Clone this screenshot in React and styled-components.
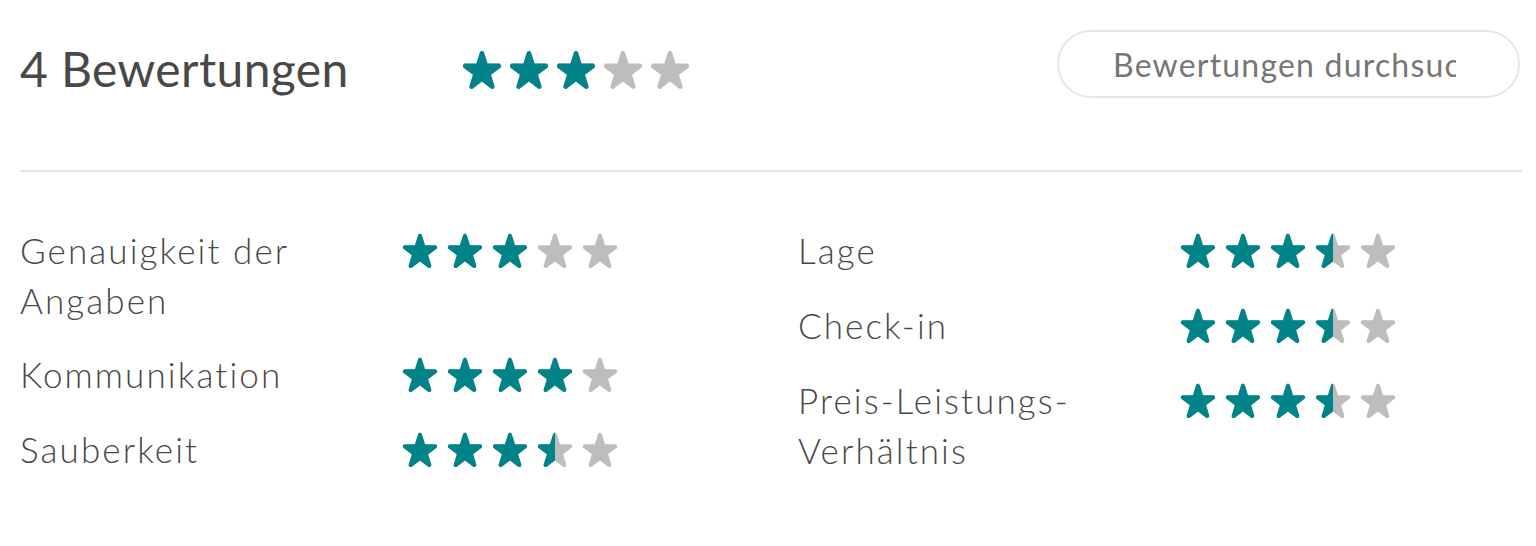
import React, { useId } from "react";
import styled, { createGlobalStyle } from "styled-components";

const Global = createGlobalStyle`
  html, body { margin: 0; padding: 0; background: #ffffff; }
  body { font-family: Lato, "Open Sans", sans-serif; -webkit-font-smoothing: antialiased; }
`;

const Page = styled.div`
  width: 1502px;
  padding: 30px 0 0 20px;
`;

const Header = styled.div`
  display: flex;
  align-items: center;
  height: 68px;
`;

const Title = styled.h2`
  margin: 0;
  width: 442px;
  font-size: 48px;
  font-weight: 400;
  letter-spacing: 0.4px;
  color: #484848;
  line-height: 68px;
  padding-top: 10px;
`;

const SearchInput = styled.input`
  margin-left: auto;
  margin-right: 2px;
  box-sizing: border-box;
  width: 463px;
  height: 68px;
  border: 2px solid #e6e6e6;
  border-radius: 34px;
  padding: 0 62px 0 54px;
  font-family: inherit;
  font-size: 32px;
  letter-spacing: 1.2px;
  color: #484848;
  background: #fff;
  outline: none;
  &::placeholder { color: #767676; }
`;

const Divider = styled.hr`
  margin: 72px 0 54px 0;
  border: 0;
  border-top: 2px solid #e4e4e4;
`;

const Columns = styled.div`
  display: grid;
  grid-template-columns: 778px 1fr;
`;

const Column = styled.div`
  display: flex;
  flex-direction: column;
  gap: 25px;
`;

const Row = styled.div`
  display: grid;
  grid-template-columns: 382px 1fr;
  align-items: start;
`;

const Label = styled.div`
  font-size: 35px;
  font-weight: 300;
  letter-spacing: 2.1px;
  line-height: 50px;
  color: #484848;
  max-width: 345px;
  margin-top: -1px;
`;

const StarsWrap = styled.div`
  display: flex;
  align-items: center;
  gap: ${(p) => p.$gap}px;
  height: ${(p) => p.$h}px;
  padding-top: ${(p) => p.$pt}px;
`;

const STAR =
  "M972 380c9 28 2 50-20 67L725 619l87 280c11 39-18 75-54 75-12 0-23-4-33-12L499 790 273 962a58 58 0 0 1-78-12 50 50 0 0 1-8-51l86-278L46 447c-21-17-28-39-19-67 8-24 29-40 52-40h280l87-279c7-23 28-39 52-39 25 0 47 17 54 41l87 277h280c24 0 45 16 53 40z";

function Star({ fill, size }) {
  const id = useId().replace(/:/g, "");
  return (
    <svg width={size} height={size} viewBox="0 0 1000 1000" aria-hidden="true">
      <defs>
        <clipPath id={`c${id}`}>
          <rect x="0" y="0" width={1000 * fill} height="1000" />
        </clipPath>
      </defs>
      <path d={STAR} fill="#bdbdbd" />
      {fill > 0 && <path d={STAR} fill="#008489" clipPath={`url(#c${id})`} />}
    </svg>
  );
}

function Stars({ value, size = 36, gap = 9, h = 50, pt = 0 }) {
  return (
    <StarsWrap $gap={gap} $h={h} $pt={pt}>
      {[0, 1, 2, 3, 4].map((i) => (
        <Star key={i} size={size} fill={Math.max(0, Math.min(1, value - i))} />
      ))}
    </StarsWrap>
  );
}

const left = [
  { label: "Genauigkeit der Angaben", value: 3 },
  { label: "Kommunikation", value: 4 },
  { label: "Sauberkeit", value: 3.5 },
];
const right = [
  { label: "Lage", value: 3.5 },
  { label: "Check-in", value: 3.5 },
  { label: "Preis-Leistungs-Verhältnis", value: 3.5 },
];

export default function App() {
  return (
    <>
      <Global />
      <Page>
        <Header>
          <Title>4 Bewertungen</Title>
          <Stars value={3} size={40} gap={7} h={68} pt={12} />
          <SearchInput type="text" placeholder="Bewertungen durchsuchen" />
        </Header>
        <Divider />
        <Columns>
          {[left, right].map((col, ci) => (
            <Column key={ci}>
              {col.map((r) => (
                <Row key={r.label}>
                  <Label>{r.label}</Label>
                  <Stars value={r.value} />
                </Row>
              ))}
            </Column>
          ))}
        </Columns>
      </Page>
    </>
  );
}
